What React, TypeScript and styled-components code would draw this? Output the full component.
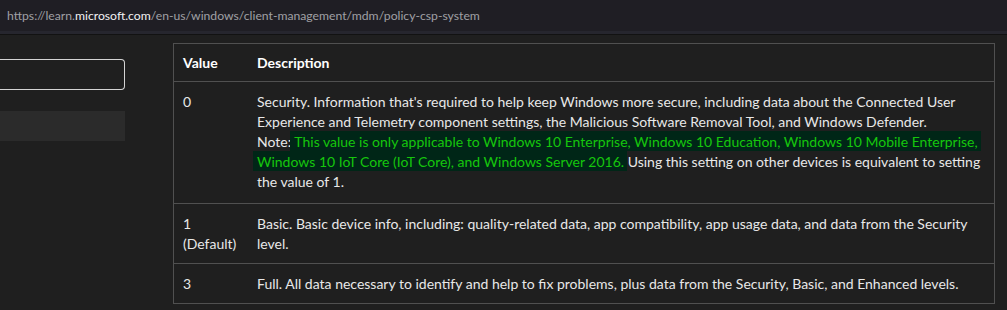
import React from 'react'
import styled, { createGlobalStyle } from 'styled-components'

const GlobalStyle = createGlobalStyle`
  html, body {
    margin: 0;
    padding: 0;
    background: #1f1f1f;
  }
  body {
    font-family: Lato, 'Noto Sans', 'Liberation Sans', sans-serif;
  }
`

const AddressBar = styled.div`
  height: 31px;
  background: #1f1e24;
  display: flex;
  align-items: center;
  padding-left: 7px;
  font-size: 12.2px;
  color: #a0a0a4;
  white-space: nowrap;
  border-bottom: 3px solid #26262e;
  box-shadow: 0 1px 0 #121212;
`

const Host = styled.span`
  color: #f2f2f2;
`

const Page = styled.div`
  display: flex;
  align-items: flex-start;
  margin-top: 1px;
`

const Sidebar = styled.div`
  width: 125px;
  flex-shrink: 0;
  display: flex;
  flex-direction: column;
  padding-top: 24px;
`

const SearchBox = styled.div`
  height: 29px;
  border: 1.5px solid #d4d4d4;
  border-left: none;
  border-radius: 0 4px 4px 0;
`

const NavItem = styled.div`
  margin-top: 21px;
  height: 30px;
  background: #2b2b2b;
`

const Main = styled.div`
  padding: 8px 0 0 48px;
`

const Table = styled.table`
  width: 822px;
  border-collapse: collapse;
  border: 1px solid #505050;
  font-size: 14px;
  line-height: 20px;
  color: #e8e8e8;
`

const Cell = styled.td<{ $head?: boolean; $extra?: number }>`
  border-top: 1px solid #505050;
  vertical-align: top;
  text-align: left;
  padding: ${({ $head, $extra = 0 }) => ($head ? '9px 5px 8px 9px' : `10px 5px ${9 + $extra}px 9px`)};
  font-weight: ${({ $head }) => ($head ? 700 : 400)};
  color: ${({ $head }) => ($head ? '#ffffff' : '#e8e8e8')};
`

const ValueCell = styled(Cell)`
  width: 60px;
`

const Note = styled.span`
  color: #16c60c;
  background: #002617;
  padding: 2px 0 1px;
  box-shadow: -4px 0 0 #002617, 3px 0 0 #002617;
  -webkit-box-decoration-break: clone;
  box-decoration-break: clone;
`

export default function App() {
  return (
    <>
      <GlobalStyle />
      <AddressBar>
        https://learn.<Host>microsoft.com</Host>/en-us/windows/client-management/mdm/policy-csp-system
      </AddressBar>
      <Page>
        <Sidebar>
          <SearchBox />
          <NavItem />
        </Sidebar>
        <Main>
          <Table>
            <thead>
              <tr>
                <ValueCell as="th" $head>Value</ValueCell>
                <Cell as="th" $head>Description</Cell>
              </tr>
            </thead>
            <tbody>
              <tr>
                <ValueCell $extra={2}>0</ValueCell>
                <Cell $extra={2}>
                  Security. Information that's required to help keep Windows more secure, including data about the
                  Connected User Experience and Telemetry component settings, the Malicious Software Removal Tool, and
                  Windows Defender.
                  <br />
                  Note:{' '}
                  <Note>
                    This value is only applicable to Windows 10 Enterprise, Windows 10 Education, Windows 10 Mobile
                    Enterprise, Windows 10 IoT Core (IoT Core), and Windows Server 2016.
                  </Note>{' '}
                  Using this setting on other devices is equivalent to setting the value of 1.
                </Cell>
              </tr>
              <tr>
                <ValueCell>1 (Default)</ValueCell>
                <Cell>
                  Basic. Basic device info, including: quality-related data, app compatibility, app usage data, and data
                  from the Security level.
                </Cell>
              </tr>
              <tr>
                <ValueCell>3</ValueCell>
                <Cell>Full. All data necessary to identify and help to fix problems, plus data from the Security, Basic, and Enhanced levels.</Cell>
              </tr>
            </tbody>
          </Table>
        </Main>
      </Page>
    </>
  )
}
